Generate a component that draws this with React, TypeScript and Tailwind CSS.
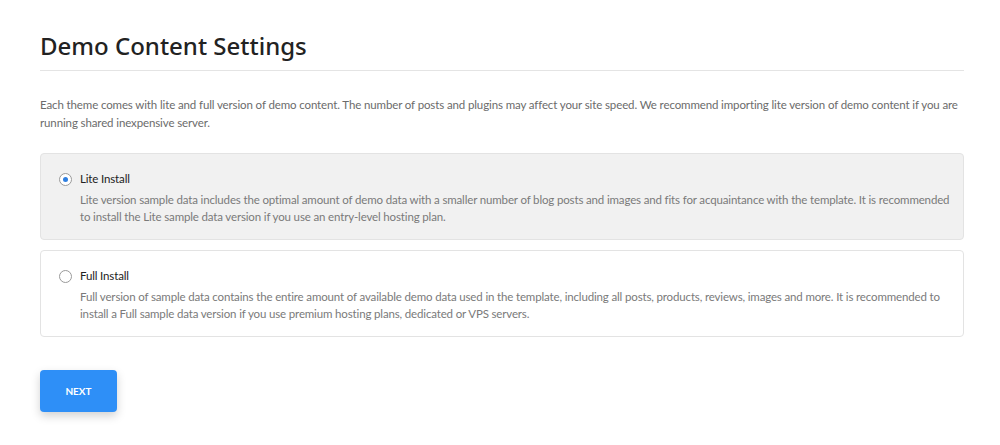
import { useState } from 'react';

const options = [
  {
    id: 'lite',
    title: 'Lite Install',
    text: 'Lite version sample data includes the optimal amount of demo data with a smaller number of blog posts and images and fits for acquaintance with the template. It is recommended to install the Lite sample data version if you use an entry-level hosting plan.',
  },
  {
    id: 'full',
    title: 'Full Install',
    text: 'Full version of sample data contains the entire amount of available demo data used in the template, including all posts, products, reviews, images and more. It is recommended to install a Full sample data version if you use premium hosting plans, dedicated or VPS servers.',
  },
];

export default function App() {
  const [selected, setSelected] = useState('lite');

  return (
    <div className="min-h-screen bg-white pl-10 pr-9 pt-[30px] font-['Lato',sans-serif] text-[#666]">
      <h1 className="font-['Noto_Sans',sans-serif] font-medium text-[24px] leading-[32px] text-[#222] pb-[8px] border-b border-[#e4e4e4]">
        Demo Content Settings
      </h1>

      <p className="mt-[25px] text-[11.5px] tracking-[-0.12px] leading-[18px] text-[#6b6b6b]">
        Each theme comes with lite and full version of demo content. The number of posts and plugins may affect your site speed. We recommend importing lite version of demo content if you are running shared inexpensive server.
      </p>

      <div className="mt-[21px] flex flex-col gap-[10px]">
        {options.map((o) => {
          const active = selected === o.id;
          return (
            <label
              key={o.id}
              onClick={() => setSelected(o.id)}
              className={`flex gap-[8px] rounded-[4px] border border-[#e3e3e3] pl-[18px] pr-[8px] pt-[16px] pb-[14px] cursor-pointer ${active ? 'bg-[#f1f1f1]' : 'bg-white'}`}
            >
              <span className="mt-[3px] flex h-[13px] w-[13px] shrink-0 items-center justify-center rounded-full border border-[#9a9a9a] bg-white">
                {active && <span className="h-[5px] w-[5px] rounded-full bg-[#2f7fe0]" />}
              </span>
              <span className="flex flex-col tracking-[-0.15px]">
                <span className="text-[11.5px] leading-[17px] text-[#222]">{o.title}</span>
                <span className="mt-[4px] text-[11.5px] leading-[17px] text-[#7a7a7a]">{o.text}</span>
              </span>
            </label>
          );
        })}
      </div>

      <button className="mt-[33px] h-[42px] w-[77px] rounded-[4px] bg-[#2e8ff7] text-[10px] font-bold text-white shadow-[0_4px_10px_rgba(0,0,0,0.18)]">
        NEXT
      </button>
    </div>
  );
}
